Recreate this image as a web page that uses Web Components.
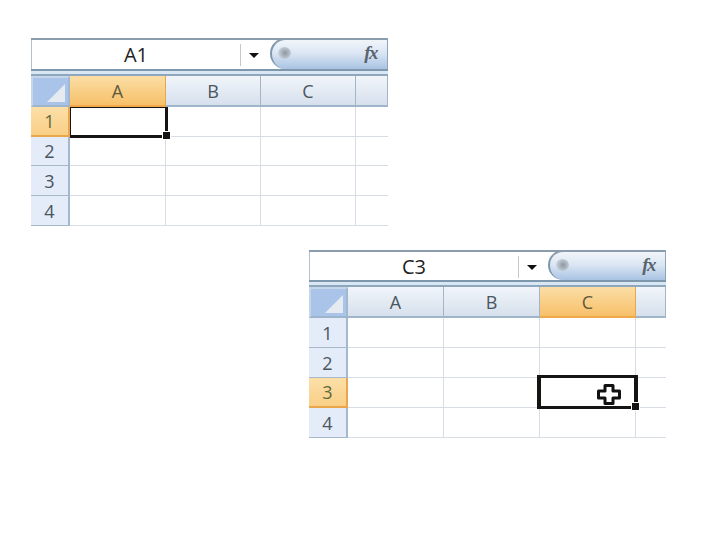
<!DOCTYPE html>
<html>
<head>
<meta charset="utf-8">
<style>
    html, body { margin: 0; background: #fff; }
    body { padding: 38px 0 0 31px; width: 689px; height: 502px; overflow: hidden; }
    excel-sheet + excel-sheet { margin: 24px 0 0 278px; }
</style>
</head>
<body>
<excel-sheet cell="A1" bar="29" widths="39 96 95 95 32" heights="31 30 29 30 30"></excel-sheet>
<excel-sheet cell="C3" bar="28" widths="39 96 96 96 30" heights="31 30 30 30 30" boxed><cross-cursor></cross-cursor></excel-sheet>

<script>
class FormulaBar extends HTMLElement {
    constructor() {
        super();
        this.attachShadow({ mode: 'open' });
        this.shadowRoot.innerHTML = `
            <style>
                :host {
                    display: flex;
                    height: var(--bar-height, 29px);
                    border-top: 2px solid #8a9cad;
                    border-bottom: 2px solid #7f97ad;
                    background: #fff;
                    font-family: "Open Sans", "Liberation Sans", sans-serif;
                }
                .name {
                    width: 208px;
                    text-align: center;
                    font-size: 20px;
                    line-height: 29px;
                    color: #222;
                    border-left: 1px solid #b4c0cc;
                }
                .sep { width: 1px; height: 22px; margin-top: 4px; background: #c4c8cc; }
                .drop { width: 29px; display: flex; justify-content: center; padding-top: 13px; padding-right: 3px; box-sizing: border-box; }
                .drop i {
                    display: block; width: 0; height: 0;
                    border-left: 5px solid transparent;
                    border-right: 5px solid transparent;
                    border-top: 5px solid #111;
                }
                .pill {
                    flex: 1;
                    display: flex;
                    justify-content: space-between;
                    align-items: center;
                    margin-top: -2px;
                    border-left: 2px solid #7f97ad;
                    border-right: 1px solid #8ea4b9;
                    border-top: 2px solid #8a9cad;
                    border-radius: 16px 0 0 16px;
                    background: linear-gradient(#f1f5fa, #dbe6f3 45%, #a9c3e3);
                    padding: 0 10px 0 6px;
                }
                .knob {
                    width: 13px; height: 12px; border-radius: 50%;
                    margin-top: -3px;
                    background: radial-gradient(circle at 55% 50%, #8f979f, #b9c3cd 55%, #e4eaf2);
                }
                .fx {
                    font: italic bold 19px "Liberation Serif", serif;
                    color: #5a646e;
                    letter-spacing: -1.5px;
                    margin-top: -3px;
                }
            </style>
            <div class="name"><slot></slot></div>
            <div class="sep"></div>
            <div class="drop"><i></i></div>
            <div class="pill"><span class="knob"></span><span class="fx">fx</span></div>`;
    }
}

class ExcelSheet extends HTMLElement {
    constructor() {
        super();
        this.attachShadow({ mode: 'open' });

        this.cols = ['A', 'B', 'C', ''];
        this.rows = ['1', '2', '3', '4'];
        const cell = this.getAttribute('cell') || 'A1';
        const activeCol = cell[0];
        const activeRow = cell[1];
        const px = (name) => this.getAttribute(name).split(' ').map(n => n + 'px').join(' ');

        let cells = '<div class="corner"><i></i></div>';
        for (const col of this.cols) {
            cells += `<div class="head ${col === activeCol ? 'on' : ''}">${col}</div>`;
        }
        for (const row of this.rows) {
            cells += `<div class="side ${row === activeRow ? 'on' : ''}">${row}</div>`;
            for (const col of this.cols) {
                if (col === activeCol && row === activeRow) {
                    cells += '<div class="cell"><div class="select"><b></b><slot></slot></div></div>';
                } else {
                    cells += '<div class="cell"></div>';
                }
            }
        }

        this.shadowRoot.innerHTML = `
            <style>
                :host {
                    display: block;
                    width: 357px;
                    font-family: "Open Sans", "Liberation Sans", sans-serif;
                    --bar-height: ${this.getAttribute('bar')}px;
                }
                .band { height: 3px; background: #d9e6f3; border-bottom: 2px solid #8fa7bd; }
                .grid {
                    display: grid;
                    grid-template-columns: ${px('widths')};
                    grid-template-rows: ${px('heights')};
                }
                .corner {
                    background: #a9c4e8;
                    border: 2px solid #c6d6ea;
                    border-right-color: #a0b8d0;
                    border-bottom-color: #9db4ca;
                    position: relative;
                    box-sizing: border-box;
                }
                .corner i {
                    position: absolute;
                    right: 3px; bottom: 3px;
                    width: 0; height: 0;
                    border-left: 18px solid transparent;
                    border-bottom: 18px solid #e6ebf2;
                }
                .head {
                    display: flex; align-items: center; justify-content: center;
                    box-sizing: border-box;
                    font-size: 18px;
                    color: #4a5560;
                    background: linear-gradient(#f1f5fa, #d6e0ec);
                    border-right: 1px solid #a3b6c8;
                    border-bottom: 2px solid #a0b5ca;
                }
                .head:last-of-type { border-right: 0; }
                .head.on {
                    color: #5f5a3c;
                    background: linear-gradient(#fbdea6, #f7c069);
                    border-right: 1px solid #eaa64a;
                    border-bottom: 2px solid #f0a848;
                }
                .side {
                    display: flex; align-items: center; justify-content: center;
                    box-sizing: border-box;
                    font-size: 18px;
                    color: #4a5560;
                    background: #e3ecf8;
                    border-right: 2px solid #a3b8cd;
                    border-bottom: 1px solid #a7b8c9;
                }
                .side.on {
                    color: #5f6a3c;
                    background: linear-gradient(#fcdfa8, #f9cf86);
                    border-right: 2px solid #eaa64a;
                    border-bottom: 2px solid #eaa64a;
                }
                .cell {
                    position: relative;
                    box-sizing: border-box;
                    border-right: 1px solid #d8dce5;
                    border-bottom: 1px solid #d8dce5;
                }
                .cell:last-child, .cell:nth-child(5n) { border-right: 0; }
                .select {
                    position: absolute;
                    left: 0; top: 0; right: -3px; bottom: -2px;
                    border: solid #161412;
                    border-width: 1px 3px 3px 1px;
                    box-sizing: border-box;
                    z-index: 1;
                    background: #fff;
                }
                :host([boxed]) .select {
                    left: -3px; top: -3px; right: -3px; bottom: -2px;
                    border-width: 3px 4px 3px 4px;
                }
                .select b {
                    position: absolute;
                    right: -5px; bottom: -4px;
                    width: 7px; height: 7px;
                    background: #161412;
                    outline: 1px solid #fff;
                }
            </style>
            <formula-bar>${cell}</formula-bar>
            <div class="band"></div>
            <div class="grid">${cells}</div>`;
    }
}

class CrossCursor extends HTMLElement {
    constructor() {
        super();
        this.attachShadow({ mode: 'open' });
        this.shadowRoot.innerHTML = `
            <style>
                :host { display: block; position: absolute; left: 56px; top: 6px; width: 24px; height: 21px; }
                svg { display: block; }
            </style>
            <svg width="24" height="21" viewBox="0 0 24 21">
                <path d="M8 1.500h8v5.500h6.500v7h-6.500v5.500h-8v-5.500h-6.500v-7h6.500z" fill="#fff" stroke="#111" stroke-width="3" stroke-linejoin="round"/>
            </svg>`;
    }
}

customElements.define('formula-bar', FormulaBar);
customElements.define('cross-cursor', CrossCursor);
customElements.define('excel-sheet', ExcelSheet);
</script>
</body>
</html>
